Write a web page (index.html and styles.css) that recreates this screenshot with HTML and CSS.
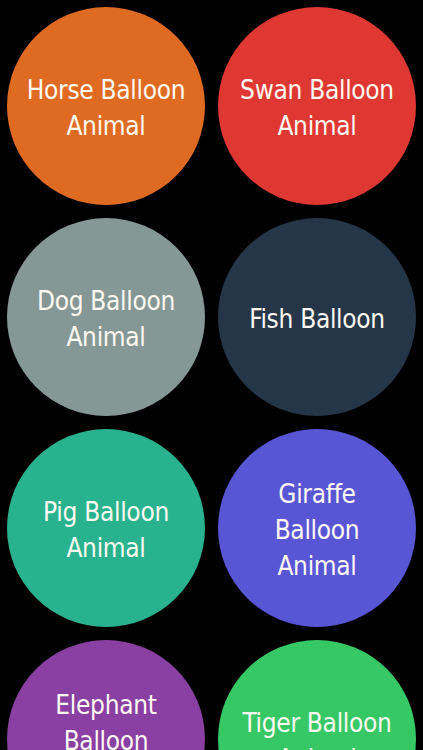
FILE: index.html
```html
<!DOCTYPE html>
<html lang="en">
<head>
  <meta charset="UTF-8">
  <meta name="viewport" content="width=device-width, initial-scale=1.0">
  <title>Balloon Animals</title>
  <link rel="stylesheet" href="styles.css">
</head>
<body>
  <div class="grid">
    <a class="bubble orange" href="#"><span>Horse Balloon Animal</span></a>
    <a class="bubble red" href="#"><span>Swan Balloon Animal</span></a>
    <a class="bubble grey" href="#"><span>Dog Balloon Animal</span></a>
    <a class="bubble navy" href="#"><span>Fish Balloon</span></a>
    <a class="bubble teal" href="#"><span>Pig Balloon Animal</span></a>
    <a class="bubble indigo" href="#"><span>Giraffe Balloon Animal</span></a>
    <a class="bubble purple" href="#"><span>Elephant Balloon Animal</span></a>
    <a class="bubble green" href="#"><span>Tiger Balloon Animal</span></a>
  </div>
</body>
</html>
```

FILE: styles.css
```css
body {
  margin: 0;
  background-color: #000;
  font-family: 'DejaVu Sans Condensed', 'DejaVu Sans', sans-serif;
  font-stretch: condensed;
}
.grid {
  display: grid;
  grid-template-columns: 198px 198px;
  grid-auto-rows: 198px;
  column-gap: 13px;
  row-gap: 13px;
  padding: 7px;
}
.bubble {
  display: flex;
  align-items: center;
  justify-content: center;
  border-radius: 50%;
  text-decoration: none;
  color: #fff9f2;
  text-align: center;
  font-size: 26px;
  line-height: 36px;
}
.bubble span {
  max-width: 164px;
  padding-top: 3px;
  letter-spacing: -0.3px;
}
.orange { background-color: #df6b22; }
.red { background-color: #df3832; }
.grey { background-color: #859896; }
.navy { background-color: #253648; }
.teal { background-color: #28b38e; }
.indigo { background-color: #5956d6; }
.purple { background-color: #8a3fa2; }
.green { background-color: #37c866; }
```
